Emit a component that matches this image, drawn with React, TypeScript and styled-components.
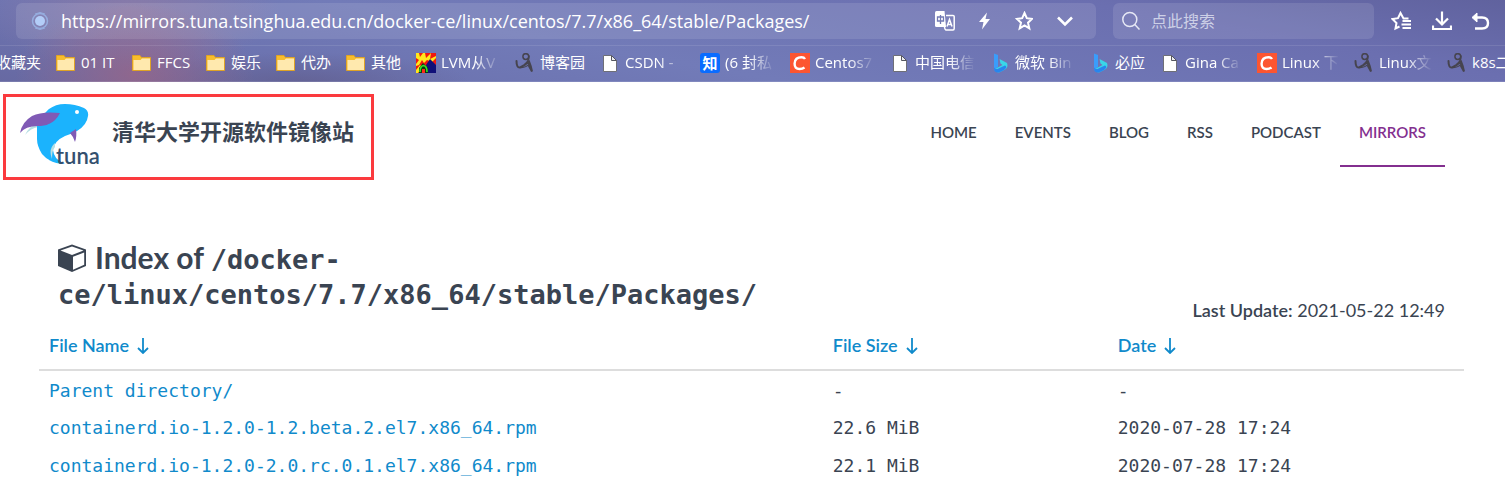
import React from "react";
import styled, { createGlobalStyle, css } from "styled-components";

const uiFont = `"Open Sans", "Noto Sans CJK SC", sans-serif`;
const siteFont = `Lato, "Noto Sans CJK SC", sans-serif`;
const monoFont = `"DejaVu Sans Mono", monospace`;

const GlobalStyle = createGlobalStyle`
  *, *::before, *::after { box-sizing: border-box; }
  body { margin: 0; background: #fff; color: #3a4452; font-family: ${siteFont}; }
  a { color: inherit; text-decoration: none; }
`;

const Page = styled.div`
  height: 100vh;
  overflow: hidden;
`;

/* ---------- browser chrome ---------- */

const Chrome = styled.header`
  background:
    radial-gradient(ellipse 120px 70px at 135px 74px, rgba(160, 100, 130, 0.7), transparent),
    radial-gradient(ellipse 150px 60px at 130px 10px, rgba(155, 125, 160, 0.6), transparent),
    radial-gradient(ellipse 170px 30px at 300px 82px, rgba(95, 90, 135, 0.6), transparent),
    linear-gradient(190deg, #60629e 0%, #6b6fb0 22%, #727bb8 60%, #6c73b0 80%, #6769a2 100%);
  color: #fff;
  font-family: ${uiFont};
`;

const Toolbar = styled.div`
  display: flex;
  align-items: center;
  gap: 17px;
  height: 46px;
  padding: 3px 14px 7px 16px;
  border-bottom: 1px solid rgba(255, 255, 255, 0.1);
`;

const Field = styled.div<{ $grow?: boolean }>`
  display: flex;
  align-items: center;
  height: 36px;
  border-radius: 6px;
  background: rgba(255, 255, 255, 0.11);
  ${(p) => (p.$grow ? css`flex: 1; padding: 0 22px 0 15px; gap: 22px;` : css`width: 261px; padding: 0 8px; gap: 10px;`)}
`;

const TextInput = styled.input`
  flex: 1;
  min-width: 0;
  padding: 0;
  border: 0;
  outline: 0;
  background: none;
  color: #fff;
  font: 18px/24px ${uiFont};
`;

const SearchInput = styled(TextInput)`
  font-size: 16px;
  &::placeholder { color: #cdd0e6; opacity: 1; }
`;

const AddressGroup = styled.div`
  display: flex;
  flex: 1;
  align-items: center;
  gap: 12px;
`;

const IconButton = styled.button`
  display: flex;
  padding: 0;
  border: 0;
  background: none;
  color: #fff;
`;

const IconGroup = styled.div<{ $gap: number }>`
  display: flex;
  align-items: center;
  gap: ${(p) => p.$gap}px;
`;

const Bookmarks = styled.nav`
  display: flex;
  gap: 15px;
  height: 36px;
  padding-bottom: 2px;
  overflow: hidden;
  border-bottom: 1px solid rgba(255, 255, 255, 0.12);
`;

const Bookmark = styled.a`
  display: flex;
  flex: none;
  align-items: center;
  gap: 5px;
  font-size: 15px;
  line-height: 22px;
`;

const BookmarkLabel = styled.span<{ $width: number; $fade?: boolean }>`
  width: ${(p) => p.$width}px;
  padding-bottom: 2px;
  overflow: hidden;
  white-space: nowrap;
  ${(p) => p.$fade && css`mask-image: linear-gradient(to right, #000 calc(100% - 26px), transparent);`}
`;

const LeadBookmark = styled(Bookmark)`
  justify-content: flex-end;
  width: 41px;
  padding-bottom: 2px;
  white-space: nowrap;
`;

type IconKind = "folder" | "file" | "lvm" | "cnblogs" | "zhihu" | "csdn" | "bing";

const ZhihuTile = styled.span`
  display: flex;
  align-items: center;
  justify-content: center;
  width: 20px;
  height: 20px;
  border-radius: 3px;
  background: #0a6cff;
  font-size: 15px;
  font-weight: 700;
`;

function SiteIcon({ kind }: { kind: IconKind }) {
  if (kind === "zhihu") return <ZhihuTile>知</ZhihuTile>;
  return (
    <svg width="20" height="20" viewBox="0 0 20 20" aria-hidden="true">
      {kind === "folder" && (
        <>
          <path d="M0.5 2.5H8L9.5 4.5H18.5V17.5H0.5Z" fill="#f8bd2d" stroke="#dfa326" />
          <path d="M1.5 7H8.5L10 5.5H18V17H1.5Z" fill="#ffe9ae" />
        </>
      )}
      {kind === "file" && (
        <>
          <path d="M3.5 2.5H11.5L16.5 7.5V18.5H3.5Z" fill="#fff" stroke="#6e6f77" />
          <path d="M11.5 2.5V7.5H16.5Z" fill="#ececf0" stroke="#55565e" />
        </>
      )}
      {kind === "lvm" && (
        <>
          <path d="M0 0H20V20H0Z" fill="#f01810" />
          <path d="M0 0H3L4 4L7 0H9L10 5L15 0L14 6L20 3V5L16 9L11 7L8 10L6 7L3 12L0 13V11L3 7L0 5Z" fill="#ffe81c" />
          <path d="M0 17L4 12L6 14L2 20H0Z" fill="#ffe81c" />
          <path d="M10 12L14 6L20 12V20H12Z" fill="#101078" />
          <path d="M3 20V15L7 10L12 15V20Z" fill="#063c10" />
          <path d="M4 19Q4 13 7.500 12.500Q11 13 11 19" fill="none" stroke="#36e326" strokeWidth="1.600" />
          <path d="M6 20V16H9V20Z" fill="#ff2818" />
        </>
      )}
      {kind === "cnblogs" && (
        <g fill="none" stroke="#46444f" strokeLinecap="round">
          <circle cx="10.800" cy="3.600" r="2.900" strokeWidth="1.500" />
          <path d="M14 3Q14 8 10 11" strokeWidth="1.500" />
          <path d="M1.500 8Q1.500 15 5 14.500Q9 13 14 8.500Q16 13 17 18.500L14 13" strokeWidth="2" />
          <path d="M5 14.500Q11 15 14 11" strokeWidth="1.200" />
        </g>
      )}
      {kind === "csdn" && (
        <>
          <path d="M0 0H20V20H0Z" fill="#fc5531" />
          <path d="M15 6Q14 4.300 11.500 4.300Q5 4.300 4.600 10.500Q4.500 16 9.500 16Q12.500 16 14.500 14.500" fill="none" stroke="#fff" strokeWidth="2.400" />
        </>
      )}
      {kind === "bing" && (
        <>
          <path d="M4 0.500L8 2V14L4 17Z" fill="#3a9dfb" />
          <path d="M9.500 6L17 10Q18.500 14 15 16.500L9 19.500Q6 19.500 4 16.500L12.500 12L10.500 10.500Z" fill="#39d7e8" />
          <path d="M4 14.500Q6 17 8.500 15.500L15 12.500Q18 14 14 17L9 19.500Q4 20 4 15.500Z" fill="#2885ee" />
        </>
      )}
    </svg>
  );
}

const bookmarks: { kind: IconKind; label: string; width: number; fade?: boolean }[] = [
  { kind: "folder", label: "01 IT", width: 36 },
  { kind: "folder", label: "FFCS", width: 34 },
  { kind: "folder", label: "娱乐", width: 30 },
  { kind: "folder", label: "代办", width: 30 },
  { kind: "folder", label: "其他", width: 30 },
  { kind: "lvm", label: "LVM从V", width: 59, fade: true },
  { kind: "cnblogs", label: "博客园", width: 45 },
  { kind: "file", label: "CSDN -", width: 60, fade: true },
  { kind: "zhihu", label: "(6 封私", width: 50, fade: true },
  { kind: "csdn", label: "Centos7", width: 60, fade: true },
  { kind: "file", label: "中国电信", width: 60, fade: true },
  { kind: "bing", label: "微软 Bin", width: 60, fade: true },
  { kind: "bing", label: "必应", width: 30 },
  { kind: "file", label: "Gina Ca", width: 57, fade: true },
  { kind: "csdn", label: "Linux 下", width: 57, fade: true },
  { kind: "cnblogs", label: "Linux文", width: 53, fade: true },
  { kind: "cnblogs", label: "k8s二", width: 60 },
];

/* ---------- toolbar icons ---------- */

const GlobeIcon = () => (
  <svg width="18" height="20" viewBox="0 0 18 20" aria-hidden="true">
    <circle cx="9" cy="10" r="7.500" fill="none" stroke="#96addf" strokeWidth="1.500" />
    <circle cx="9" cy="10" r="5" fill="#b3cdf8" />
    <path d="M4 3Q9 0 14 3M4 17Q9 20 14 17" fill="none" stroke="#96addf" />
  </svg>
);

const TranslateIcon = () => (
  <svg width="20" height="20" viewBox="0 0 20 20" fill="none" aria-hidden="true">
    <path d="M1.500 0H9.500L11 16H1.500Q0 16 0 14.500V1.500Q0 0 1.500 0Z" fill="#fff" />
    <path d="M11 4.500H18Q19.200 4.500 19.200 5.500V17.500Q19.200 19 18 19H11Q10 19 9.500 16" stroke="#fff" strokeWidth="1.500" />
    <path d="M2.500 6H8.500V10H2.500ZM5.500 4V13" stroke="#7279b3" strokeWidth="1.300" />
    <path d="M12 15.500L14.500 8.500L17 15.500M13 13.500H16" stroke="#fff" strokeWidth="1.500" />
  </svg>
);

const BoltIcon = () => (
  <svg width="12" height="18" viewBox="0 0 12 18" fill="#fff" aria-hidden="true">
    <path d="M9 0.500L1 10H5.500L4 17.500L12 7H7.500Z" />
  </svg>
);

const StarIcon = () => (
  <svg width="20" height="20" viewBox="0 0 20 20" fill="none" stroke="#fff" strokeWidth="2" aria-hidden="true">
    <path d="M11.500 2L13.800 7.200L19 7.900L15 11.700L16.300 17.300L11.500 14.400L6.700 17.300L8 11.700L4 7.900L9.200 7.200Z" />
  </svg>
);

const ChevronIcon = () => (
  <svg width="18" height="12" viewBox="0 0 18 12" fill="none" stroke="#fff" strokeWidth="2.600" aria-hidden="true">
    <path d="M2 2.500L9 9.500L16 2.500" />
  </svg>
);

const SearchIcon = () => (
  <svg width="20" height="20" viewBox="0 0 20 20" fill="none" stroke="#e6e8f5" strokeWidth="1.500" aria-hidden="true">
    <circle cx="8.800" cy="8.500" r="7" />
    <path d="M13.800 13.500L18.500 18.500" />
  </svg>
);

const FavoritesIcon = () => (
  <svg width="22" height="20" viewBox="0 0 22 20" fill="none" stroke="#fff" strokeWidth="2" aria-hidden="true">
    <path d="M17.500 7.500H12.500L9.500 2L7 7.200L1.500 8L5.500 12L4.500 17.500L8.500 15.500" />
    <path d="M11.500 10H20M10.500 13.500H20M11.500 17H20" />
  </svg>
);

const DownloadIcon = () => (
  <svg width="20" height="20" viewBox="0 0 20 20" fill="none" stroke="#fff" strokeWidth="2.200" aria-hidden="true">
    <path d="M10 0.500V13M4 7.500L10 13.500L16 7.500M1 14.500V18H19V14.500" />
  </svg>
);

const UndoIcon = () => (
  <svg width="20" height="20" viewBox="0 0 20 20" fill="none" stroke="#fff" strokeWidth="2.400" aria-hidden="true">
    <path d="M3 6.500H11Q17 6.500 17 12Q17 17.500 11 17.500H4" />
    <path d="M6 2L1 6.500L6 11Z" fill="#fff" strokeWidth="1" />
  </svg>
);

/* ---------- site header ---------- */

const SiteHeader = styled.div`
  display: flex;
  justify-content: space-between;
  align-items: flex-start;
  padding: 12px 60px 0 3px;
`;

const Brand = styled.a`
  display: flex;
  align-items: flex-start;
  gap: 11px;
  width: 371px;
  height: 86px;
  padding: 6px 0 0 13px;
  border: 3px solid #fb3a3e;
`;

const BrandName = styled.span`
  padding-top: 12px;
  font-size: 22px;
  font-weight: 700;
  line-height: 34px;
  white-space: nowrap;
`;

const SiteNav = styled.nav`
  display: flex;
  padding-top: 5px;
`;

const NavLink = styled.a<{ $active?: boolean }>`
  height: 68px;
  padding: 23px 19px 0;
  border-bottom: 2px solid ${(p) => (p.$active ? "#832f8f" : "transparent")};
  color: ${(p) => (p.$active ? "#832f8f" : "inherit")};
  font-size: 15px;
  font-weight: 600;
  line-height: 20px;
`;

const TunaLogo = () => (
  <svg width="82" height="66" viewBox="0 0 82 66" aria-hidden="true">
    <path d="M6 32Q10 23 20 19L19 24Q12 25 6 32Z" fill="#b6dfe4" />
    <path d="M27 9Q34 1 46 1Q56 1 65 5Q70 8 69 13Q68 22 58 28Q52 31 46 33Q35 38 34 47Q35 56 44 60L46 61Q31 61 23 51Q18 43 18 36V18Z" fill="#1bb3fd" />
    <path d="M1 30Q3 19 13 13Q23 8 41 10Q35 22 22 23Q7 22 1 30Z" fill="#805ab5" />
    <path d="M51 30L57 26Q58 34 56 39Q54 33 51 30Z" fill="#805ab5" />
    <path d="M36 40Q29 46 33 56Q33 47 36 44Z" fill="#b6dfe4" />
    <circle cx="58" cy="9" r="2" fill="#fff" />
    <text x="37" y="61" fill="#34506e" fontFamily="Lato, sans-serif" fontSize="22" fontWeight="600">tuna</text>
  </svg>
);

/* ---------- listing ---------- */

const Main = styled.main`
  padding: 60px 41px 0 39px;
`;

const TitleBar = styled.div`
  display: flex;
  justify-content: space-between;
  align-items: flex-end;
  padding: 0 19px;
`;

const Title = styled.h1`
  width: 54%;
  margin: 0;
  padding-bottom: 11px;
  font-size: 30px;
  font-weight: 700;
  line-height: 35px;
`;

const TitlePath = styled.code`
  font-family: ${monoFont};
  font-size: 27px;
  font-weight: 700;
  line-height: 30px;
`;

const TitleIcon = styled.svg`
  margin-right: 8px;
  vertical-align: -4px;
`;

const Updated = styled.p`
  margin: 0;
  font-size: 18px;
  line-height: 22px;
`;

const UpdatedLabel = styled.strong`
  font-weight: 600;
`;

const Listing = styled.table`
  width: 100%;
  table-layout: fixed;
  border-collapse: collapse;
`;

const Column = styled.col<{ $share: number }>`
  width: ${(p) => p.$share}%;
`;

const HeadCell = styled.th`
  height: 49px;
  padding: 0 10px 1px;
  border-bottom: 2px solid #ddd;
  color: #108acb;
  font-size: 18px;
  font-weight: 600;
  text-align: left;
`;

const SortLink = styled.a`
  display: inline-flex;
  align-items: center;
  gap: 8px;
`;

const Cell = styled.td`
  height: 38px;
  padding: 2px 10px 0;
  font-family: ${monoFont};
  font-size: 18px;
  line-height: 26px;
`;

const FileLink = styled.a`
  color: #108acb;
`;

const SortArrow = () => (
  <svg width="12" height="18" viewBox="0 0 12 18" fill="none" stroke="#108acb" strokeWidth="1.800" aria-hidden="true">
    <path d="M6 2V17M1 12L6 17L11 12" />
  </svg>
);

const navItems = ["HOME", "EVENTS", "BLOG", "RSS", "PODCAST", "MIRRORS"];
const columns = [
  { name: "File Name", share: 55 },
  { name: "File Size", share: 20 },
  { name: "Date", share: 25 },
];
const files = [
  ["Parent directory/", "-", "-"],
  ["containerd.io-1.2.0-1.2.beta.2.el7.x86_64.rpm", "22.6 MiB", "2020-07-28 17:24"],
  ["containerd.io-1.2.0-2.0.rc.0.1.el7.x86_64.rpm", "22.1 MiB", "2020-07-28 17:24"],
  ["containerd.io-1.2.0-2.2.rc.2.1.el7.x86_64.rpm", "22.1 MiB", "2020-07-28 17:24"],
];

export default function App() {
  return (
    <Page>
      <GlobalStyle />
      <Chrome>
        <Toolbar>
          <Field $grow>
            <AddressGroup>
              <GlobeIcon />
              <TextInput
                type="text"
                aria-label="Address"
                defaultValue="https://mirrors.tuna.tsinghua.edu.cn/docker-ce/linux/centos/7.7/x86_64/stable/Packages/"
              />
            </AddressGroup>
            <IconGroup $gap={23}>
              <IconButton aria-label="Translate"><TranslateIcon /></IconButton>
              <IconButton aria-label="Fast mode"><BoltIcon /></IconButton>
              <IconButton aria-label="Bookmark"><StarIcon /></IconButton>
              <IconButton aria-label="More"><ChevronIcon /></IconButton>
            </IconGroup>
          </Field>
          <Field>
            <SearchIcon />
            <SearchInput type="search" aria-label="搜索" placeholder="点此搜索" />
          </Field>
          <IconGroup $gap={19}>
            <IconButton aria-label="Favorites"><FavoritesIcon /></IconButton>
            <IconButton aria-label="Downloads"><DownloadIcon /></IconButton>
            <IconButton aria-label="Undo"><UndoIcon /></IconButton>
          </IconGroup>
        </Toolbar>
        <Bookmarks>
          <LeadBookmark href="#">收藏夹</LeadBookmark>
          {bookmarks.map((b) => (
            <Bookmark href="#" key={b.label}>
              <SiteIcon kind={b.kind} />
              <BookmarkLabel $width={b.width} $fade={b.fade}>{b.label}</BookmarkLabel>
            </Bookmark>
          ))}
        </Bookmarks>
      </Chrome>

      <SiteHeader>
        <Brand href="#">
          <TunaLogo />
          <BrandName>清华大学开源软件镜像站</BrandName>
        </Brand>
        <SiteNav>
          {navItems.map((item) => (
            <NavLink href="#" key={item} $active={item === "MIRRORS"}>{item}</NavLink>
          ))}
        </SiteNav>
      </SiteHeader>

      <Main>
        <TitleBar>
          <Title>
            <TitleIcon width="29" height="29" viewBox="0 0 29 29" aria-hidden="true">
              <path d="M14 0.500L28 5.500V22L14 28L0 22V5.500Z" fill="#3a4452" />
              <path d="M14 2.500L25.500 6.500L14 11L2.500 6.500Z" fill="#fff" />
              <path d="M15 12.800L26.200 8.500V20.800L15 25.800Z" fill="#fff" />
            </TitleIcon>
            Index of <TitlePath>/docker-ce/linux/centos/7.7/x86_64/stable/Packages/</TitlePath>
          </Title>
          <Updated><UpdatedLabel>Last Update:</UpdatedLabel> 2021-05-22 12:49</Updated>
        </TitleBar>
        <Listing>
          <colgroup>
            {columns.map((c) => <Column key={c.name} $share={c.share} />)}
          </colgroup>
          <thead>
            <tr>
              {columns.map((c) => (
                <HeadCell key={c.name} scope="col">
                  <SortLink href="#">{c.name}<SortArrow /></SortLink>
                </HeadCell>
              ))}
            </tr>
          </thead>
          <tbody>
            {files.map(([name, size, date]) => (
              <tr key={name}>
                <Cell><FileLink href="#">{name}</FileLink></Cell>
                <Cell>{size}</Cell>
                <Cell>{date}</Cell>
              </tr>
            ))}
          </tbody>
        </Listing>
      </Main>
    </Page>
  );
}
